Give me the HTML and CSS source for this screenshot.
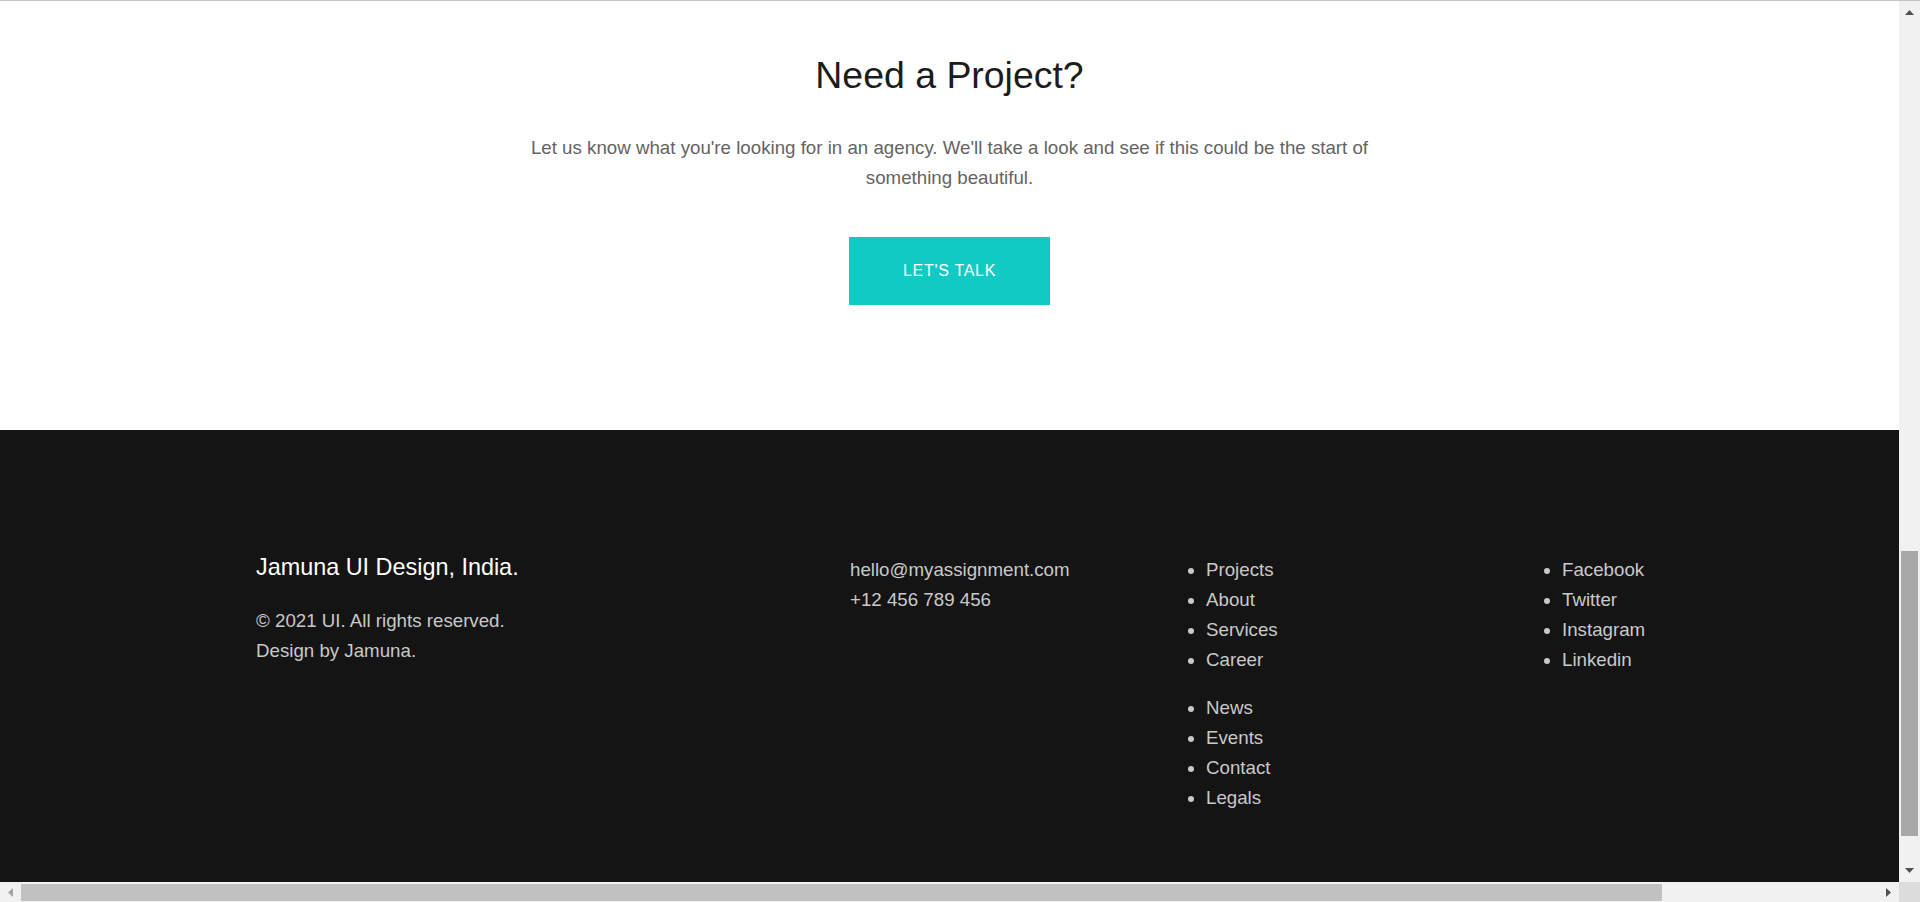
FILE: index.html
```html
<!DOCTYPE html>
<html lang="en">
<head>
<meta charset="utf-8">
<title>Need a Project?</title>
<link rel="stylesheet" href="styles.css">
</head>
<body>
<div class="window">
  <div class="topline"></div>
  <div class="frame">
    <div class="viewport">
      <section class="cta">
        <h2 class="cta-title">Need a Project?</h2>
        <p class="cta-text">Let us know what you're looking for in an agency. We'll take a look and see if this could be the start of something beautiful.</p>
        <a class="cta-btn" href="#">LET'S TALK</a>
      </section>
      <footer class="site-footer">
        <div class="footer-grid">
          <div class="col-brand">
            <h3 class="brand-title">Jamuna UI Design, India.</h3>
            <p class="foot-text">© 2021 UI. All rights reserved.<br>Design by Jamuna.</p>
          </div>
          <div class="col-contact">
            <p class="foot-text">hello@myassignment.com<br>+12 456 789 456</p>
          </div>
          <div class="col-links">
            <ul class="foot-list">
              <li>Projects</li>
              <li>About</li>
              <li>Services</li>
              <li>Career</li>
            </ul>
            <ul class="foot-list">
              <li>News</li>
              <li>Events</li>
              <li>Contact</li>
              <li>Legals</li>
            </ul>
          </div>
          <div class="col-social">
            <ul class="foot-list">
              <li>Facebook</li>
              <li>Twitter</li>
              <li>Instagram</li>
              <li>Linkedin</li>
            </ul>
          </div>
        </div>
      </footer>
    </div>
    <div class="vscroll">
      <div class="sb-btn">
        <svg width="9" height="5" viewBox="0 0 9 5"><polygon points="4.5,0 9,5 0,5" fill="#505050"/></svg>
      </div>
      <div class="vtrack">
        <div class="vthumb" style="margin-top:527px;height:285px"></div>
      </div>
      <div class="sb-btn">
        <svg width="9" height="5" viewBox="0 0 9 5"><polygon points="0,0 9,0 4.5,5" fill="#505050"/></svg>
      </div>
    </div>
  </div>
  <div class="hbar">
    <div class="hscroll">
      <div class="sb-btn-h">
        <svg width="5" height="9" viewBox="0 0 5 9"><polygon points="5,0 5,9 0,4.5" fill="#a3a3a3"/></svg>
      </div>
      <div class="htrack">
        <div class="hthumb" style="width:1641px"></div>
      </div>
      <div class="sb-btn-h">
        <svg width="5" height="9" viewBox="0 0 5 9"><polygon points="0,0 5,4.5 0,9" fill="#505050"/></svg>
      </div>
    </div>
    <div class="corner"></div>
  </div>
</div>
</body>
</html>
```
FILE: styles.css
```css
html, body {
  margin: 0;
  padding: 0;
}

body {
  background: #ffffff;
  font-family: "Liberation Sans", Arial, sans-serif;
  font-size: 18.72px;
  overflow: hidden;
}

.window {
  display: flex;
  flex-direction: column;
  width: 1920px;
  height: 902px;
}

.topline {
  height: 1px;
  background: #c4c4c4;
}

.frame {
  display: flex;
  height: 881px;
}

.viewport {
  flex: 1;
  overflow: hidden;
  background: #ffffff;
}

/* ---------- CTA ---------- */
.cta {
  display: flex;
  flex-direction: column;
  align-items: center;
  text-align: center;
  padding: 52px 0 125px;
}

.cta-title {
  margin: 0 0 35px;
  font-size: 37.44px;
  line-height: 1.2;
  font-weight: 400;
  color: #1c1c1c;
}

.cta-text {
  margin: 0 0 44px;
  max-width: 880px;
  font-size: 18.72px;
  line-height: 1.6;
  color: #646464;
}

.cta-btn {
  display: block;
  padding: 24px 54px;
  background: #11cac4;
  color: #ffffff;
  font-size: 16px;
  line-height: 20px;
  letter-spacing: 0.7px;
  text-decoration: none;
}

/* ---------- Footer ---------- */
.site-footer {
  background: #141414;
  padding: 125px 0 80px;
}

.footer-grid {
  display: grid;
  grid-template-columns: 594px 316px 356px 1fr;
  padding-left: 256px;
}

.brand-title {
  margin: 0 0 25.8px;
  font-size: 23.4px;
  line-height: 1.1;
  font-weight: 400;
  color: #ffffff;
}

.foot-text {
  margin: 0;
  font-size: 18.72px;
  line-height: 1.6;
  color: #c9c9c9;
}

.foot-list {
  margin: 0 0 18.72px;
  padding-left: 40px;
  list-style: disc;
  font-size: 18.72px;
  line-height: 1.6;
  color: #c9c9c9;
}

/* ---------- Scrollbars ---------- */
.vscroll {
  width: 21px;
  background: #f1f1f1;
  display: flex;
  flex-direction: column;
}

.sb-btn {
  height: 23px;
  display: flex;
  align-items: center;
  justify-content: center;
}

.vtrack {
  flex: 1;
  display: flex;
  flex-direction: column;
  align-items: center;
}

.vthumb {
  width: 17px;
  background: #a8a8a8;
}

.hbar {
  display: flex;
  height: 20px;
}

.hscroll {
  flex: 1;
  display: flex;
  background: #f1f1f1;
}

.sb-btn-h {
  width: 21px;
  display: flex;
  align-items: center;
  justify-content: center;
}

.htrack {
  flex: 1;
  display: flex;
  align-items: flex-start;
}

.hthumb {
  height: 17px;
  margin-top: 2px;
  background: #c1c1c1;
}

.corner {
  width: 21px;
  background: #dcdcdc;
}
```
